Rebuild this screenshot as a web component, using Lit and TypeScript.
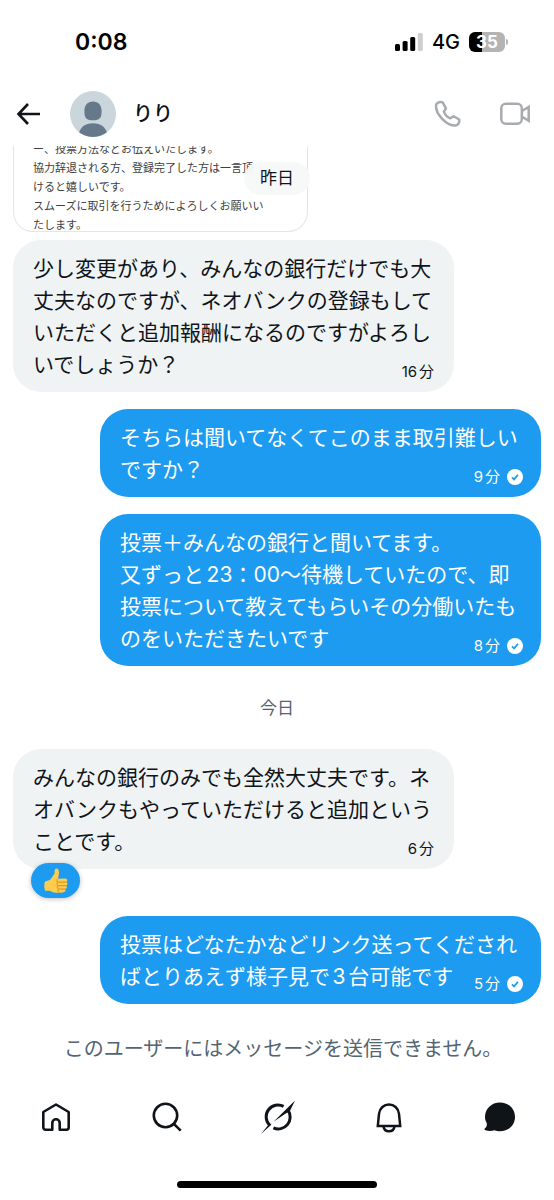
import { LitElement, html, css, svg, nothing } from "lit";
import { customElement, property } from "lit/decorators.js";

interface Message {
  own: boolean;
  text: string;
  age: string;
  reaction?: boolean;
}

const yesterday: Message[] = [
  {
    own: false,
    text: "少し変更があり、みんなの銀行だけでも大丈夫なのですが、ネオバンクの登録もしていただくと追加報酬になるのですがよろしいでしょうか？",
    age: "16分",
  },
  { own: true, text: "そちらは聞いてなくてこのまま取引難しいですか？", age: "9分" },
  {
    own: true,
    text: "投票＋みんなの銀行と聞いてます。\n又ずっと23：00～待機していたので、即投票について教えてもらいその分働いたものをいただきたいです",
    age: "8分",
  },
];

const today: Message[] = [
  {
    own: false,
    text: "みんなの銀行のみでも全然大丈夫です。ネオバンクもやっていただけると追加ということです。",
    age: "6分",
    reaction: true,
  },
  {
    own: true,
    text: "投票はどなたかなどリンク送ってくださればとりあえず様子見で3台可能です",
    age: "5分",
  },
];

const notes = [
  "ー、投票方法などお伝えいたします。",
  "協力辞退される方、登録完了した方は一言頂",
  "けると嬉しいです。",
  "スムーズに取引を行うためによろしくお願いい",
  "たします。",
];

@customElement("status-bar")
class StatusBar extends LitElement {
  static styles = css`
    :host {
      display: flex;
      align-items: center;
      justify-content: space-between;
      height: 28px;
      padding: 28px 46px 26px 75px;
      color: #000;
    }
    .clock {
      font-size: 23px;
      font-weight: 600;
    }
    .signals {
      display: flex;
      align-items: center;
      gap: 9px;
      font-size: 20px;
      font-weight: 500;
    }
    .battery {
      display: flex;
      align-items: center;
      gap: 1px;
    }
    .level {
      width: 36px;
      height: 20px;
      border-radius: 6px;
      background: linear-gradient(90deg, #000 35%, #b4b4b4 35%);
      color: #fff;
      font-size: 17px;
      font-weight: 700;
      line-height: 20px;
      text-align: center;
    }
    .tip {
      width: 2px;
      height: 6px;
      border-radius: 0 2px 2px 0;
      background: #b4b4b4;
    }
    svg {
      display: block;
    }
  `;
  render() {
    return html`
      <span class="clock">0:08</span>
      <span class="signals">
        <svg width="28" height="18" viewBox="0 0 28 18">
          <rect x="0" y="11" width="5" height="7" rx="1.5" />
          <rect x="7.6" y="8" width="5" height="10" rx="1.5" />
          <rect x="15.2" y="4" width="5" height="14" rx="1.5" />
          <rect x="22.8" y="0" width="5" height="18" rx="1.5" fill="#cfcfcf" />
        </svg>
        <span>4G</span>
        <span class="battery"><span class="level">35</span><span class="tip"></span></span>
      </span>
    `;
  }
}

@customElement("chat-bubble")
class ChatBubble extends LitElement {
  @property({ attribute: false }) message!: Message;

  static styles = css`
    :host {
      display: flex;
      flex: none;
    }
    .bubble {
      position: relative;
      box-sizing: border-box;
      width: 441px;
      max-width: 84%;
      padding: 13px 20px 11px;
      border-radius: 28px;
      background: #eff3f4;
      color: #0f1419;
    }
    .own {
      margin-left: auto;
      padding-right: 18px;
      background: #1d9bf0;
      color: #fff;
    }
    .text {
      display: flow-root;
      margin: 0;
      font-size: 21px;
      line-height: 32px;
      white-space: pre-wrap;
      line-break: anywhere;
      word-break: break-all;
    }
    .meta {
      display: flex;
      float: right;
      align-items: center;
      gap: 7px;
      margin: 14px 0 0 12px;
      font-size: 15px;
      line-height: 18px;
      white-space: nowrap;
    }
    .reaction {
      position: absolute;
      left: 18px;
      bottom: -29px;
      display: grid;
      place-items: center;
      width: 49px;
      height: 35px;
      padding: 0;
      border: 0;
      border-radius: 18px;
      background: #1d9bf0;
      box-shadow: 0 1px 5px rgba(0, 0, 0, 0.25);
    }
  `;
  render() {
    const { own, text, age, reaction } = this.message;
    const check = html`<svg width="16" height="16" viewBox="0 0 16 16"><circle cx="8" cy="8" r="8" fill="#fff" /><path d="M5 8.4 7.1 10.4 11 5.7" fill="none" stroke="#1d9bf0" stroke-width="1.7" /></svg>`;
    return html`
      <div class="bubble ${own ? "own" : ""}">
        <p class="text">${text}<span class="meta"><span>${age}</span>${own ? check : nothing}</span></p>
        ${reaction
          ? html`<button class="reaction" aria-label="いいね">
              <svg width="24" height="26" viewBox="0 0 24 26">
                <path
                  d="M1 13.5C3.4 12.6 5.5 12.8 7 10.8L10.6 5.6C10.7 3.6 10.4 1 12 .6 14 .1 15.2 2.4 15 5 14.9 7.2 14.3 9 14 10.8L21.4 10.6C23.6 10.8 23.8 13.4 22.3 14 24 14.8 23.8 17.2 22 17.6 23.4 18.6 22.9 20.8 21.2 21 22.2 22.4 21.4 24 19.6 24.2 15.6 24.9 10.5 25.2 7.5 23.4 5.4 22.6 3 23 1.2 22.8 0 20 0 16 1 13.5Z"
                  fill="#ffcb4c"
                />
                <path
                  d="M14 10.8C12.8 11.6 12.6 13.3 13.8 14.1 12.6 15 12.7 17 13.9 17.7 12.9 18.6 13.2 20.4 14.4 21 13.6 22 13.9 23.6 15 24.6M14 14.1H22.3M14 17.7H22M14.4 21H21.2"
                  fill="none"
                  stroke="#d88f1c"
                  stroke-width="1"
                />
              </svg>
            </button>`
          : nothing}
      </div>
    `;
  }
}

const homeIcon = svg`<path d="M17 4.500 29.700 12V27.300Q29.700 29.800 27.200 29.800H20.700V23A3.700 3.700 0 0 0 13.300 23V29.800H6.800Q4.300 29.800 4.300 27.300V12Z" fill="none" stroke="currentColor" stroke-width="2.600" stroke-linejoin="round"/>`;
const searchIcon = svg`<circle cx="15.500" cy="15.500" r="11.700" fill="none" stroke="currentColor" stroke-width="2.600"/><path d="M23.600 23.600 30.700 30.700" stroke="currentColor" stroke-width="2.600"/>`;
const grokIcon = svg`<path d="M22.600 6.300A11.900 11.900 0 0 0 8.600 25.200M12.400 27.900A11.900 11.900 0 0 0 27 10.200" fill="none" stroke="currentColor" stroke-width="3"/><path d="M34 .5 12.500 21.700 24.700 13.400 28.700 11.500ZM0 34 7.300 25 10.300 23.500 10 25Z" fill="currentColor"/>`;
const bellIcon = svg`<path d="M5.800 26 7 13.800C7.700 8 12 4.500 17 4.500S26.300 8 27 13.800L28.200 26ZM11.500 26.500C12 30 14.500 31.300 17 31.300S22 30 22.500 26.500" fill="none" stroke="currentColor" stroke-width="2.500"/>`;
const messageIcon = svg`<path d="M17 2.500C25.600 2.500 32 8.800 32 17S25.600 31.300 17 31.300C15 31.300 13.300 31 11.600 30.200 8.500 31.300 5 31.300 2 30.100 1.200 29.700 1.300 28.700 2 28.200 3.700 26.700 4.300 25 3.600 22.700 2.500 21 2 19 2 17 2 8.800 8.400 2.500 17 2.500Z" fill="currentColor"/>`;

const tabs = [
  { label: "ホーム", icon: homeIcon },
  { label: "検索", icon: searchIcon },
  { label: "Grok", icon: grokIcon },
  { label: "通知", icon: bellIcon },
  { label: "メッセージ", icon: messageIcon },
];

@customElement("app-root")
class AppRoot extends LitElement {
  static styles = css`
    :host {
      display: flex;
      flex-direction: column;
      height: 100vh;
      overflow: hidden;
      background: #fff;
      color: #0f1419;
      font-family: Inter, "Noto Sans CJK JP", sans-serif;
      text-autospace: normal;
    }
    svg {
      display: block;
    }
    button {
      display: block;
      padding: 0;
      border: 0;
      background: none;
      color: inherit;
    }
    .header {
      display: flex;
      align-items: center;
      height: 64px;
      padding: 0 23px 0 16px;
    }
    .avatar {
      margin: 0 17px 0 30px;
    }
    .name {
      flex: 1;
      margin: 0;
      font-size: 20px;
      font-weight: 500;
      line-height: 24px;
    }
    .calls {
      display: flex;
      gap: 37px;
      color: #a8abae;
    }
    .thread {
      position: relative;
      display: flex;
      flex: 1;
      flex-direction: column;
      justify-content: flex-end;
      min-height: 0;
      padding: 0 13px;
      overflow: hidden;
    }
    .floating-day {
      position: absolute;
      top: 16px;
      left: 50%;
      padding: 0 16px;
      border-radius: 17px;
      background: rgba(247, 248, 248, 0.96);
      color: #0f1419;
      font-size: 17px;
      line-height: 33px;
      transform: translateX(-50%);
    }
    .card {
      box-sizing: border-box;
      flex: none;
      width: 295px;
      margin-bottom: 8px;
      padding: 0 19px;
      border: 1px solid #e3e6e8;
      border-top: 0;
      border-radius: 0 0 20px 20px;
      color: #3c4043;
      font-size: 11px;
      line-height: 19px;
      white-space: nowrap;
    }
    .card p {
      margin: 0;
    }
    .card p:last-child {
      margin-bottom: -4px;
    }
    .group {
      display: flex;
      flex: none;
      flex-direction: column;
      gap: 17px;
    }
    .today {
      gap: 47px;
    }
    .day {
      flex: none;
      padding: 26px 0 25px;
      color: #536471;
      font-size: 17px;
      line-height: 32px;
      text-align: center;
    }
    .notice {
      margin: 0;
      padding: 29px 0 20px 12px;
      color: #536471;
      font-size: 20px;
      line-height: 32px;
      text-align: center;
    }
    .tabs {
      display: flex;
      height: 64px;
    }
    .tab {
      display: grid;
      flex: 1;
      place-items: center;
      padding-left: 2px;
      color: #0f1419;
    }
    .indicator {
      flex: none;
      width: 36%;
      height: 7px;
      margin: 32px auto 12px;
      border-radius: 4px;
      background: #000;
    }
  `;
  render() {
    const bubble = (m: Message) => html`<chat-bubble .message=${m}></chat-bubble>`;
    return html`
      <status-bar></status-bar>
      <header class="header">
        <button aria-label="戻る">
          <svg width="24" height="24" viewBox="0 0 24 24" fill="none" stroke="currentColor" stroke-width="2.6">
            <path d="M12 2 2.500 12 12 22M2.500 12H24" />
          </svg>
        </button>
        <svg class="avatar" width="46" height="46" viewBox="0 0 46 46">
          <defs><clipPath id="disc"><circle cx="23" cy="23" r="23" /></clipPath></defs>
          <g clip-path="url(#disc)">
            <rect width="46" height="46" fill="#cbd6dc" />
            <path
              d="M23 10.500C28.500 10.500 31.600 14.300 31.600 20 31.600 26.600 30.400 29.300 23 29.300S14.400 26.600 14.400 20C14.400 14.300 17.500 10.500 23 10.500ZM8 46C9.500 36 15 32.300 23 32.300S36.500 36 38 46Z"
              fill="#66798a"
            />
          </g>
        </svg>
        <h1 class="name">りり</h1>
        <div class="calls">
          <button aria-label="音声通話">
            <svg width="30" height="30" viewBox="0 0 30 30" fill="none" stroke="currentColor" stroke-width="2.5" stroke-linejoin="round">
              <path d="M3 6.500C2.500 15 13.500 26.800 22.500 26.500 25 26.300 26.700 23.800 26.200 20.500L20.700 17.200 17.300 19.300C14.600 18.200 12 15.600 10.900 12.600L13 9.400 9.600 3.400C6 2.500 3.300 3.800 3 6.500Z" />
            </svg>
          </button>
          <button aria-label="ビデオ通話">
            <svg width="31" height="30" viewBox="0 0 31 30" fill="none" stroke="currentColor" stroke-width="2.500">
              <rect x="1.300" y="4.800" width="20.500" height="20" rx="4.500" />
              <path d="M22 12 28.700 8V21.700L22 17.700" />
            </svg>
          </button>
        </div>
      </header>
      <main class="thread">
        <div class="card">${notes.map((line) => html`<p>${line}</p>`)}</div>
        <div class="group">${yesterday.map(bubble)}</div>
        <div class="day">今日</div>
        <div class="group today">${today.map(bubble)}</div>
        <div class="floating-day">昨日</div>
      </main>
      <p class="notice">このユーザーにはメッセージを送信できません。</p>
      <nav class="tabs">
        ${tabs.map(
          (t) => html`<button class="tab" aria-label=${t.label}>
            <svg width="34" height="34" viewBox="0 0 34 34">${t.icon}</svg>
          </button>`,
        )}
      </nav>
      <div class="indicator"></div>
    `;
  }
}
